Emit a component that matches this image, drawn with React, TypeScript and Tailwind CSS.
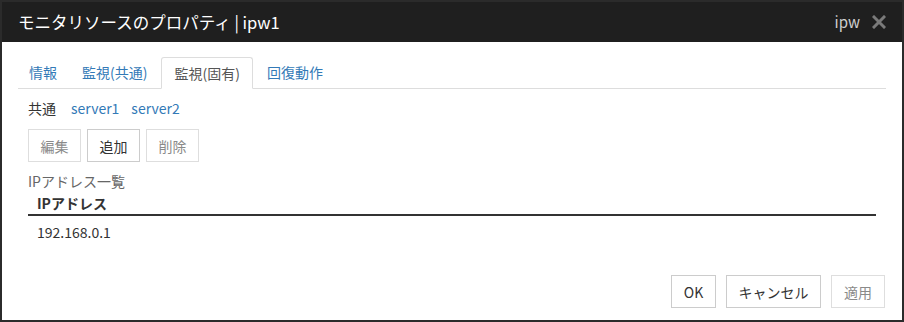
import React from "react";

const font = { fontFamily: '"Noto Sans CJK JP", "Noto Sans", sans-serif' };

function Btn({ label, disabled, className = "" }: { label: string; disabled?: boolean; className?: string }) {
  return (
    <button
      className={`h-[33px] border bg-white text-[14px] leading-none ${
        disabled ? "border-[#dedede] text-[#8a8a8a]" : "border-[#cccccc] text-[#333333]"
      } ${className}`}
    >
      {label}
    </button>
  );
}

export default function App() {
  const tabs = ["情報", "監視(共通)", "監視(固有)", "回復動作"];
  return (
    <div style={font} className="w-[904px] h-[322px] bg-white">
      <div className="w-[904px] h-[322px] border-2 border-[#2b2b2b] flex flex-col">
        <div className="h-[40px] bg-[#1f1f1f] flex items-center justify-between pl-4 pr-4 shrink-0">
          <span className="text-white text-[16.5px]">モニタリソースのプロパティ | ipw1</span>
          <div className="flex items-center gap-3">
            <span className="text-[#cfcfcf] text-[15px]">ipw</span>
            <svg width="14" height="14" viewBox="0 0 14 14">
              <path d="M2 2 L12 12 M12 2 L2 12" stroke="#7a7a7a" strokeWidth="3" strokeLinecap="square" />
            </svg>
          </div>
        </div>

        <div className="flex-1 flex flex-col px-4">
          <div className="mt-[15px] flex border-b border-[#dddddd] h-[32px] text-[14px]">
            {tabs.map((t, i) =>
              i === 2 ? (
                <div
                  key={t}
                  className="-mb-px mr-[3px] px-[12px] flex items-center border border-[#dddddd] border-b-white rounded-t-[3px] bg-white text-[#555555]"
                >
                  {t}
                </div>
              ) : (
                <div key={t} className="mr-[3px] px-[11px] flex items-center text-[#337ab7]">
                  {t}
                </div>
              )
            )}
          </div>

          <div className="pl-[10px] mt-[8px] flex text-[14px] h-[22px] items-center">
            <span className="text-[#333333]">共通</span>
            <span className="text-[#337ab7] ml-[15px]">server1</span>
            <span className="text-[#337ab7] ml-[12px]">server2</span>
          </div>

          <div className="pl-[10px] mt-[10px] flex gap-[6px]">
            <Btn label="編集" disabled className="w-[53px]" />
            <Btn label="追加" className="w-[53px]" />
            <Btn label="削除" disabled className="w-[53px]" />
          </div>

          <div className="pl-[10px] mt-[9px] text-[14px] text-[#666666] h-[20px] flex items-center">IPアドレス一覧</div>

          <div className="ml-[10px] mr-[10px] mt-[2px]">
            <div className="h-[23px] border-b-2 border-[#333333] pl-[9px] flex items-center text-[14px] font-bold text-[#333333]">
              IPアドレス
            </div>
            <div className="h-[32px] pl-[9px] flex items-center text-[14px] text-[#333333]">192.168.0.1</div>
          </div>

          <div className="mt-auto mb-[12px] flex justify-end gap-[10px] pr-[1px]">
            <Btn label="OK" className="w-[45px]" />
            <Btn label="キャンセル" className="w-[95px]" />
            <Btn label="適用" disabled className="w-[54px]" />
          </div>
        </div>
      </div>
    </div>
  );
}
